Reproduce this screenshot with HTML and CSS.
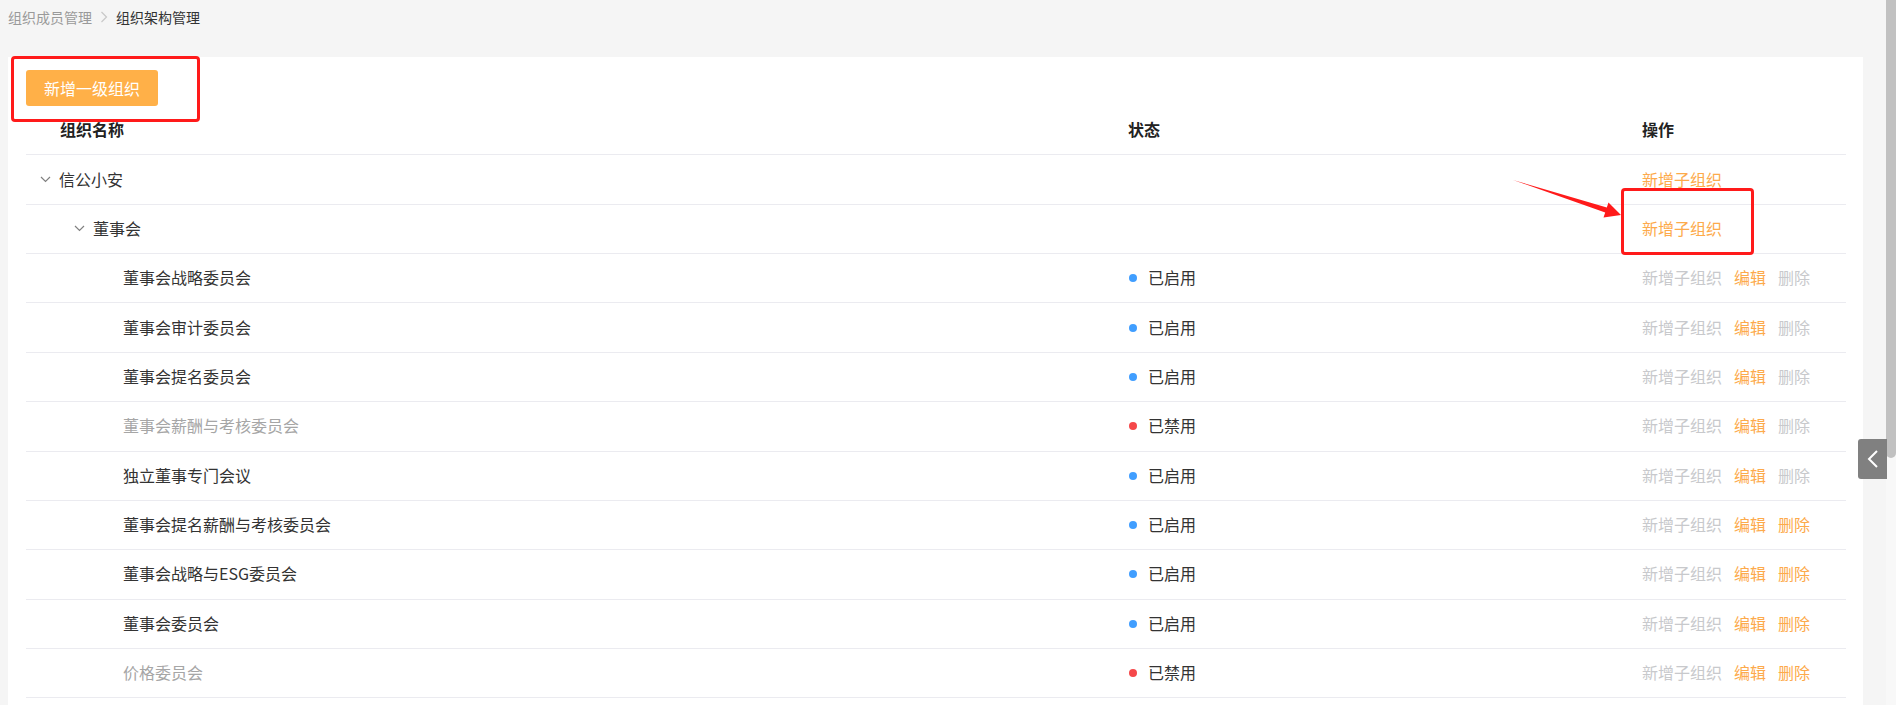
FILE: index.html
```html
<!DOCTYPE html>
<html lang="zh-CN">
<head>
    <meta charset="UTF-8">
    <meta name="viewport" content="width=device-width, initial-scale=1.0">
    <title>组织架构管理</title>
    <link rel="stylesheet" href="styles.css">
</head>
<body>
    <div class="page">
        <div class="main">
            <div class="crumbs">
                <span class="crumb">组织成员管理</span>
                <svg class="crumb-sep" width="8" height="12" viewBox="0 0 8 12"><path d="M1.5 1 L6.5 6 L1.5 11" fill="none" stroke="#c8c8c8" stroke-width="1.2"/></svg>
                <span class="crumb current">组织架构管理</span>
            </div>

            <div class="card">
                <button class="btn-add">新增一级组织</button>

                <div class="table">
                    <div class="row head">
                        <div class="cell name-head">组织名称</div>
                        <div class="cell">状态</div>
                        <div class="cell">操作</div>
                    </div>

                    <div class="row">
                        <div class="cell lv0"><svg class="caret" width="11" height="7" viewBox="0 0 11 7"><path d="M1 1 L5.5 5.5 L10 1" fill="none" stroke="#808080" stroke-width="1.2"/></svg>信公小安</div>
                        <div class="cell"></div>
                        <div class="cell"><span class="op on">新增子组织</span></div>
                    </div>
                    <div class="row">
                        <div class="cell lv1"><svg class="caret" width="11" height="7" viewBox="0 0 11 7"><path d="M1 1 L5.5 5.5 L10 1" fill="none" stroke="#808080" stroke-width="1.2"/></svg>董事会</div>
                        <div class="cell"></div>
                        <div class="cell"><span class="op on">新增子组织</span></div>
                    </div>
                    <div class="row">
                        <div class="cell lv2">董事会战略委员会</div>
                        <div class="cell"><span class="dot blue"></span>已启用</div>
                        <div class="cell"><span class="op">新增子组织</span><span class="op on">编辑</span><span class="op">删除</span></div>
                    </div>
                    <div class="row">
                        <div class="cell lv2">董事会审计委员会</div>
                        <div class="cell"><span class="dot blue"></span>已启用</div>
                        <div class="cell"><span class="op">新增子组织</span><span class="op on">编辑</span><span class="op">删除</span></div>
                    </div>
                    <div class="row">
                        <div class="cell lv2">董事会提名委员会</div>
                        <div class="cell"><span class="dot blue"></span>已启用</div>
                        <div class="cell"><span class="op">新增子组织</span><span class="op on">编辑</span><span class="op">删除</span></div>
                    </div>
                    <div class="row">
                        <div class="cell lv2 off">董事会薪酬与考核委员会</div>
                        <div class="cell"><span class="dot red"></span>已禁用</div>
                        <div class="cell"><span class="op">新增子组织</span><span class="op on">编辑</span><span class="op">删除</span></div>
                    </div>
                    <div class="row">
                        <div class="cell lv2">独立董事专门会议</div>
                        <div class="cell"><span class="dot blue"></span>已启用</div>
                        <div class="cell"><span class="op">新增子组织</span><span class="op on">编辑</span><span class="op">删除</span></div>
                    </div>
                    <div class="row">
                        <div class="cell lv2">董事会提名薪酬与考核委员会</div>
                        <div class="cell"><span class="dot blue"></span>已启用</div>
                        <div class="cell"><span class="op">新增子组织</span><span class="op on">编辑</span><span class="op on">删除</span></div>
                    </div>
                    <div class="row">
                        <div class="cell lv2">董事会战略与ESG委员会</div>
                        <div class="cell"><span class="dot blue"></span>已启用</div>
                        <div class="cell"><span class="op">新增子组织</span><span class="op on">编辑</span><span class="op on">删除</span></div>
                    </div>
                    <div class="row">
                        <div class="cell lv2">董事会委员会</div>
                        <div class="cell"><span class="dot blue"></span>已启用</div>
                        <div class="cell"><span class="op">新增子组织</span><span class="op on">编辑</span><span class="op on">删除</span></div>
                    </div>
                    <div class="row">
                        <div class="cell lv2 off">价格委员会</div>
                        <div class="cell"><span class="dot red"></span>已禁用</div>
                        <div class="cell"><span class="op">新增子组织</span><span class="op on">编辑</span><span class="op on">删除</span></div>
                    </div>
                </div>
            </div>
        </div>

        <div class="scroll-track">
            <div class="scroll-thumb"></div>
        </div>
    </div>

    <!-- floating side toggle -->
    <div class="side-tab">
        <svg width="12" height="20" viewBox="0 0 12 20"><path d="M10 2 L2 10 L10 18" fill="none" stroke="#fff" stroke-width="2"/></svg>
    </div>

    <!-- screenshot annotations -->
    <div class="mark mark-btn"></div>
    <div class="mark mark-op"></div>
    <svg class="mark-arrow" width="1896" height="705" viewBox="0 0 1896 705">
        <polygon points="1513,180 1606.8,207.6 1608.5,202.4 1621,215 1603.5,217.6 1605.2,212.4" fill="#ff1a1a"/>
    </svg>
</body>
</html>
```

FILE: styles.css
```css
:root {
    --bg: #f5f5f5;
    --orange: #fdaa4b;
    --btn: #ffb048;
    --line: #ebebf0;
    --text: #333333;
    --muted: #a6a6a6;
    --op-off: #c8c9cc;
    --mark: #ff1a1a;
}

body {
    margin: 0;
    padding: 0;
    background: var(--bg);
    font-family: "Noto Sans CJK SC", "Noto Sans", sans-serif;
    color: var(--text);
    overflow: hidden;
}

.page {
    display: flex;
    height: 705px;
}

.main {
    flex: 1;
    padding: 0 23px 0 8px;
}

.crumbs {
    display: flex;
    align-items: center;
    gap: 7px;
    height: 33px;
    font-size: 14px;
    color: #9a9a9a;
}

.crumb.current {
    color: #333;
}

.crumb-sep {
    margin: 0 1px;
}

.card {
    margin-top: 24px;
    background: #fff;
    padding: 13px 17px 0 18px;
    height: 648px;
    box-sizing: border-box;
}

.btn-add {
    display: block;
    width: 132px;
    height: 36px;
    border: none;
    border-radius: 3px;
    background: var(--btn);
    color: #fff;
    font-family: inherit;
    font-size: 16px;
    padding: 0 0 1px;
}

.row {
    display: grid;
    grid-template-columns: 1102px 514px 1fr;
    align-items: center;
    height: 49.36px;
    box-sizing: border-box;
    border-bottom: 1px solid var(--line);
    font-size: 16px;
    padding-bottom: 2px;
}

.head {
    font-weight: bold;
    color: #222;
}

.cell {
    display: flex;
    align-items: center;
    white-space: nowrap;
}

.name-head {
    padding-left: 34px;
}

.lv0 {
    padding-left: 14px;
}

.lv1 {
    padding-left: 48px;
}

.lv2 {
    padding-left: 97px;
}

.caret {
    margin: 2px 8px 0 0;
}

.off {
    color: var(--muted);
}

.dot {
    width: 8px;
    height: 8px;
    border-radius: 50%;
    margin: 2px 11px 0 1px;
}

.dot.blue {
    background: #409eff;
}

.dot.red {
    background: #f5484a;
}

.op {
    color: var(--op-off);
    margin-right: 12px;
}

.op.on {
    color: var(--orange);
}

.scroll-track {
    width: 10px;
    background: #f8f8f8;
}

.scroll-thumb {
    height: 458px;
    background: #c1c1c1;
    border-radius: 0 0 5px 5px;
}

.side-tab {
    position: absolute;
    left: 1858px;
    top: 439px;
    width: 29px;
    height: 40px;
    background: #808080;
    border-radius: 3px 0 0 3px;
    display: flex;
    align-items: center;
    justify-content: center;
}

.mark {
    position: absolute;
    border: 3px solid var(--mark);
    border-radius: 4px;
    box-sizing: border-box;
}

.mark-btn {
    left: 11px;
    top: 56px;
    width: 189px;
    height: 66px;
}

.mark-op {
    left: 1621px;
    top: 188px;
    width: 133px;
    height: 67px;
}

.mark-arrow {
    position: absolute;
    left: 0;
    top: 0;
    pointer-events: none;
}
```
